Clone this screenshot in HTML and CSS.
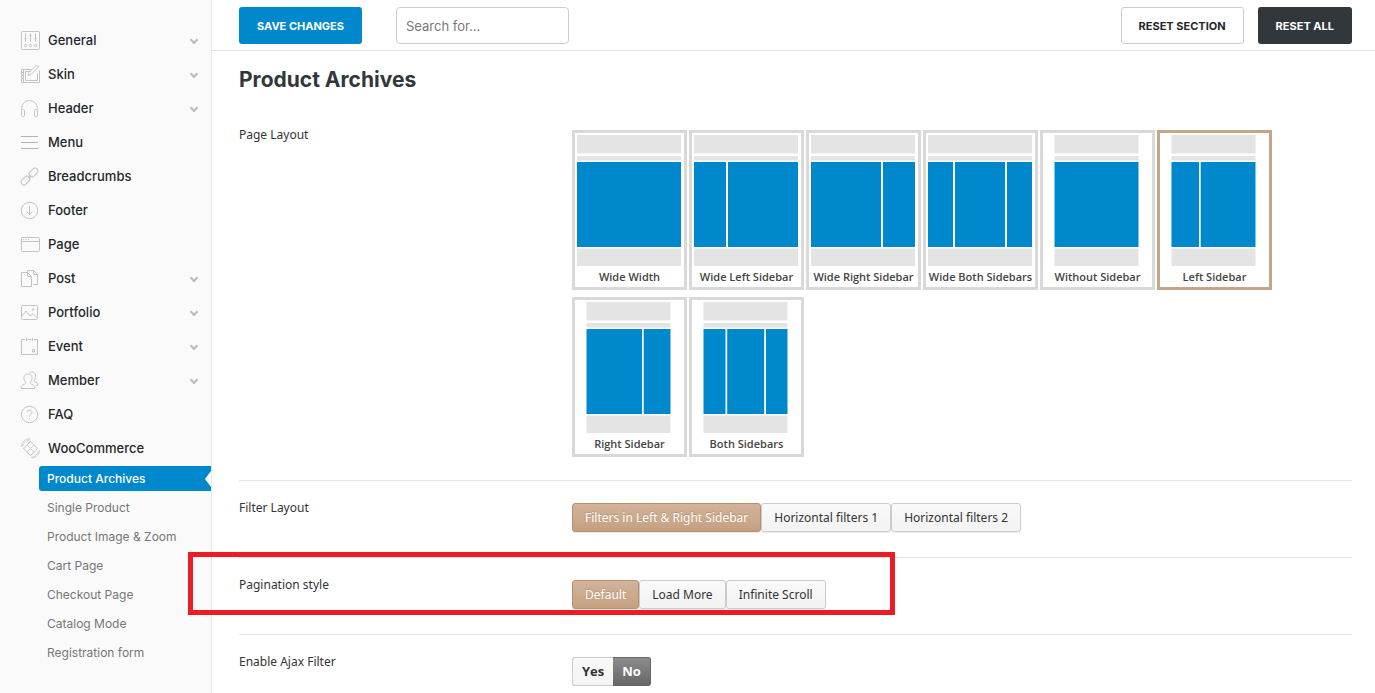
FILE: index.html
```html
<!DOCTYPE html>
<html lang="en">
<head>
  <meta charset="UTF-8">
  <meta name="viewport" content="width=device-width, initial-scale=1.0">
  <title>Theme Options - Product Archives</title>
  <link rel="stylesheet" href="styles.css">
</head>
<body>

  <!-- Sidebar -->
  <nav class="sidebar">
    <ul class="menu">
      <li><a href="#" class="has-sub">
        <svg class="icon" viewBox="0 0 20 20"><rect x="1.500" y="1.500" width="18" height="18" rx="1"/><path d="M5.500 3.500v8M10.500 3.500v8M15.500 3.500v8M4.500 8.500h2M9.500 5.500h2M14.500 8.500h2"/><circle cx="5.500" cy="15.500" r="1.200"/><circle cx="10.500" cy="15.500" r="1.200"/><circle cx="15.500" cy="15.500" r="1.200"/></svg>
        General</a></li>
      <li><a href="#" class="has-sub">
        <svg class="icon" viewBox="0 0 20 20"><path d="M11.500 5.500h-10v13h18V6.500M3.500 5.500v13M1.500 8.500h2M1.500 11.500h2M1.500 14.500h2M11 7.500H5.500v9h12V9.500M8 11.500l1-3L16.500 1l2 2L11 10.500z"/></svg>
        Skin</a></li>
      <li><a href="#" class="has-sub">
        <svg class="icon" viewBox="0 0 20 20"><path d="M1.500 11.500V10.500a8 8 0 0 1 16 0v1"/><rect x="1.500" y="11.500" width="3" height="7" rx="1"/><rect x="14.500" y="11.500" width="3" height="7" rx="1"/></svg>
        Header</a></li>
      <li><a href="#">
        <svg class="icon bars" viewBox="0 0 20 20"><path d="M1 4.500h17M1 10.500h17M1 16.500h17"/></svg>
        Menu</a></li>
      <li><a href="#">
        <svg class="icon" viewBox="0 0 20 20"><rect x="-5" y="-2.800" width="10" height="5.600" rx="2.800" transform="translate(13.500 6.500) rotate(-45)"/><rect x="-5" y="-2.800" width="10" height="5.600" rx="2.800" transform="translate(5.500 14.500) rotate(-45)"/><path d="M7.500 12.500l4-4"/></svg>
        Breadcrumbs</a></li>
      <li><a href="#">
        <svg class="icon" viewBox="0 0 20 20"><circle cx="9.500" cy="10.500" r="8.200"/><path d="M9.500 6v8.500M6.500 11.500l3 3 3-3"/></svg>
        Footer</a></li>
      <li><a href="#">
        <svg class="icon" viewBox="0 0 20 20"><rect x="1.500" y="3.500" width="18" height="14" rx="1"/><path d="M1.500 7.500h18M3 5.500h1M5.500 5.500h1M8 5.500h1"/></svg>
        Page</a></li>
      <li><a href="#" class="has-sub">
        <svg class="icon" viewBox="0 0 20 20"><path d="M1.500 4.500h6l4 4v10h-10zM7.500 4.500v4h4M7.500 4V2.500h6l4 4v10h-4.500M13.500 2.500v4h4"/></svg>
        Post</a></li>
      <li><a href="#" class="has-sub">
        <svg class="icon" viewBox="0 0 20 20"><rect x="1.500" y="3.500" width="16" height="14" rx="1"/><path d="M1.500 14.500L6 9l4 5 3-2.500 4.500 4.500"/><circle cx="13" cy="7.500" r=".8"/></svg>
        Portfolio</a></li>
      <li><a href="#" class="has-sub">
        <svg class="icon" viewBox="0 0 20 20"><path d="M5 3.500H1.500v15h16v-15H14M7.500 3.500h4M6.500 2v3M12.500 2v3M12.500 13.500h2V16h-2z"/></svg>
        Event</a></li>
      <li><a href="#" class="has-sub">
        <svg class="icon" viewBox="0 0 20 20"><path d="M1 18.500c0-3 1.500-3.500 3.500-4.200 1.500-.5 1.500-1.300.8-2.300C2.500 8 4 4 8 4s5.500 4 2.700 8c-.7 1-.7 1.800.8 2.300 2 .7 3.500 1.200 3.500 4.200zM9.500 3c1-1 2-1.200 3-1 3.500.7 4 4.500 2 7.800-.6 1-.5 1.700.8 2.200 1.500.6 2.500 1 2.500 3.500h-2"/></svg>
        Member</a></li>
      <li><a href="#">
        <svg class="icon" viewBox="0 0 20 20"><circle cx="9.500" cy="10.500" r="8.200"/><path d="M7 8.500a2.500 2.500 0 1 1 3.500 2.300c-.8.4-1 .8-1 1.700M9.500 14.200v1"/></svg>
        FAQ</a></li>
      <li>
        <a href="#">
          <svg class="icon woo" viewBox="0 0 20 20"><rect x="5.500" y="5.500" width="10" height="10" transform="rotate(45 10.500 10.500)"/><path d="M7 7l7 7M14 7l-7 7M2.500 8C3.500 4.500 6.500 2 10 1.500M1.500 9C1.500 4 5.500.5 10 .5M11 19.500c4-.5 6.500-3 7.500-6.500M12 20c5-.5 7.500-4 7.500-8"/></svg>
          WooCommerce</a>
        <ul class="submenu">
          <li><a href="#" class="active">Product Archives</a></li>
          <li><a href="#">Single Product</a></li>
          <li><a href="#">Product Image &amp; Zoom</a></li>
          <li><a href="#">Cart Page</a></li>
          <li><a href="#">Checkout Page</a></li>
          <li><a href="#">Catalog Mode</a></li>
          <li><a href="#">Registration form</a></li>
        </ul>
      </li>
      <li><a href="#" aria-label="More options">
        <svg class="icon" viewBox="0 0 20 20"><path d="M6 3.500h15v14H6z"/></svg>
      </a></li>
    </ul>
  </nav>

  <!-- Options panel -->
  <main class="panel">
    <header class="topbar">
      <button type="button" class="btn btn-primary">Save Changes</button>
      <input type="text" class="search" placeholder="Search for..." aria-label="Search for">
      <button type="button" class="btn btn-light">Reset Section</button>
      <button type="button" class="btn btn-dark">Reset All</button>
    </header>

    <form class="options">
      <h2>Product Archives</h2>

      <div class="field" role="radiogroup" aria-labelledby="layoutTitle">
        <div class="field-title" id="layoutTitle">Page Layout</div>
        <div class="layouts">
          <label class="layout">
            <input type="radio" name="layout">
            <svg viewBox="0 0 109 134"><path class="block" d="M2 2h104v18.500H2zM2 23h104v4.500H2zM2 115.500h104V133H2z"/><path class="area" d="M2 29h104v85H2z"/></svg>
            <span>Wide Width</span>
          </label>
          <label class="layout">
            <input type="radio" name="layout">
            <svg viewBox="0 0 109 134"><path class="block" d="M2 2h104v18.500H2zM2 23h104v4.500H2zM2 115.500h104V133H2z"/><path class="area" d="M2 29h32v85H2zM36 29h70v85H36z"/></svg>
            <span>Wide Left Sidebar</span>
          </label>
          <label class="layout">
            <input type="radio" name="layout">
            <svg viewBox="0 0 109 134"><path class="block" d="M2 2h104v18.500H2zM2 23h104v4.500H2zM2 115.500h104V133H2z"/><path class="area" d="M2 29h70v85H2zM74 29h32v85H74z"/></svg>
            <span>Wide Right Sidebar</span>
          </label>
          <label class="layout">
            <input type="radio" name="layout">
            <svg viewBox="0 0 109 134"><path class="block" d="M2 2h104v18.500H2zM2 23h104v4.500H2zM2 115.500h104V133H2z"/><path class="area" d="M2 29h25v85H2zM29 29h50v85H29zM81 29h25v85H81z"/></svg>
            <span>Wide Both Sidebars</span>
          </label>
          <label class="layout">
            <input type="radio" name="layout">
            <svg viewBox="0 0 109 134"><path class="block" d="M11.500 2h84v18.500h-84zM11.500 23h84v4.500h-84zM11.500 115.500h84V133h-84z"/><path class="area" d="M11.500 29h84v85h-84z"/></svg>
            <span>Without Sidebar</span>
          </label>
          <label class="layout">
            <input type="radio" name="layout" checked>
            <svg viewBox="0 0 109 134"><path class="block" d="M11.500 2h84v18.500h-84zM11.500 23h84v4.500h-84zM11.500 115.500h84V133h-84z"/><path class="area" d="M11.500 29H39v85H11.500zM40.700 29h54.800v85H40.700z"/></svg>
            <span>Left Sidebar</span>
          </label>
          <label class="layout">
            <input type="radio" name="layout">
            <svg viewBox="0 0 109 134"><path class="block" d="M11.500 2h84v18.500h-84zM11.500 23h84v4.500h-84zM11.500 115.500h84V133h-84z"/><path class="area" d="M11.500 29H67v85H11.500zM68.700 29h26.800v85H68.700z"/></svg>
            <span>Right Sidebar</span>
          </label>
          <label class="layout">
            <input type="radio" name="layout">
            <svg viewBox="0 0 109 134"><path class="block" d="M11.500 2h84v18.500h-84zM11.500 23h84v4.500h-84zM11.500 115.500h84V133h-84z"/><path class="area" d="M11.500 29h22v85h-22zM35.200 29h37v85h-37zM74 29h21.500v85H74z"/></svg>
            <span>Both Sidebars</span>
          </label>
        </div>
      </div>

      <div class="field" role="radiogroup" aria-labelledby="filterTitle">
        <div class="field-title" id="filterTitle">Filter Layout</div>
        <div class="buttonset">
          <label><input type="radio" name="filter" checked><span>Filters in Left &amp; Right Sidebar</span></label>
          <label><input type="radio" name="filter"><span>Horizontal filters 1</span></label>
          <label><input type="radio" name="filter"><span>Horizontal filters 2</span></label>
        </div>
      </div>

      <div class="field marked" role="radiogroup" aria-labelledby="pagingTitle">
        <div class="field-title" id="pagingTitle">Pagination style</div>
        <div class="buttonset">
          <label><input type="radio" name="paging" checked><span>Default</span></label>
          <label><input type="radio" name="paging"><span>Load More</span></label>
          <label><input type="radio" name="paging"><span>Infinite Scroll</span></label>
        </div>
      </div>

      <div class="field" role="radiogroup" aria-labelledby="ajaxTitle">
        <div class="field-title" id="ajaxTitle">Enable Ajax Filter</div>
        <div class="switch">
          <label><input type="radio" name="ajax"><span>Yes</span></label>
          <label><input type="radio" name="ajax" checked><span>No</span></label>
        </div>
      </div>
    </form>
  </main>

</body>
</html>
```

FILE: styles.css
```css
*,
*::before,
*::after {
  margin: 0;
  padding: 0;
  box-sizing: border-box;
}

body {
  display: flex;
  height: 100vh;
  overflow: hidden;
  background-color: #fff;
  color: #333;
  font-family: "Noto Sans", "Open Sans", sans-serif;
  font-size: 12px;
}

ul {
  list-style: none;
}

a {
  text-decoration: none;
}

/* Sidebar */
.sidebar {
  flex: 0 0 212px;
  padding-top: 23px;
  background-color: #fafafa;
  border-right: 1px solid #e5e5e5;
  font-family: Inter, sans-serif;
}

.menu > li > a {
  display: flex;
  align-items: center;
  gap: 8px;
  height: 34px;
  padding-left: 20px;
  color: #23282d;
  font-size: 13px;
  font-weight: 500;
}

.icon {
  width: 20px;
  height: 20px;
  overflow: visible;
  fill: none;
  stroke: #c4c4c4;
  stroke-width: 1;
}

.bars {
  stroke: #b4b4b4;
}

.woo {
  stroke: #d0d0d0;
}

.has-sub::after {
  content: "";
  width: 6px;
  height: 6px;
  margin: 0 14px 0 auto;
  border: solid #bbb;
  border-width: 0 2px 2px 0;
  transform: rotate(45deg);
}

.submenu {
  display: flex;
  flex-direction: column;
  gap: 4px;
  margin: 1px 0 24px 39px;
}

.submenu a {
  display: block;
  padding-left: 8px;
  color: #777;
  font-size: 12px;
  line-height: 25px;
}

.submenu .active {
  position: relative;
  background-color: #0088cc;
  border-radius: 3px 0 0 3px;
  color: #fff;
  font-weight: 500;
}

.submenu .active::after {
  content: "";
  position: absolute;
  top: 5px;
  right: 0;
  border: solid transparent;
  border-width: 8px 6px 8px 0;
  border-right-color: #fff;
}

/* Top bar */
.panel {
  flex: 1;
  min-width: 0;
}

.topbar {
  display: flex;
  gap: 14px;
  padding: 7px 23px 6px 27px;
  border-bottom: 1px solid #e5e5e5;
}

.btn {
  height: 37px;
  padding: 0 17px;
  border: 1px solid transparent;
  border-radius: 3px;
  font-family: Inter, sans-serif;
  font-size: 11px;
  font-weight: 700;
  text-transform: uppercase;
  cursor: pointer;
}

.btn-primary {
  background-color: #0088cc;
  color: #fff;
}

.btn-light {
  background-color: #fff;
  border-color: #ccc;
  color: #23282d;
}

.btn-dark {
  background-color: #32373c;
  color: #fff;
}

.search {
  width: 173px;
  height: 37px;
  margin: 0 auto 0 20px;
  padding: 0 9px;
  border: 1px solid #ccc;
  border-radius: 4px;
  font-family: Inter, sans-serif;
  font-size: 13px;
}

.search::placeholder {
  color: #777;
}

/* Fields */
.options {
  padding: 14px 23px 0 27px;
}

h2 {
  color: #32373c;
  font-family: Inter, sans-serif;
  font-size: 21px;
  font-weight: 700;
  line-height: 30px;
}

.field {
  display: grid;
  grid-template-columns: 333px 1fr;
  padding: 22px 0 23px;
  border-top: 1px solid #e5e5e5;
}

h2 + .field {
  margin-top: 12px;
  border-top-color: transparent;
}

.field-title {
  margin-top: -5px;
  line-height: 20px;
}

input[type="radio"] {
  position: absolute;
  opacity: 0;
}

/* Layout pictures */
.layouts {
  display: flex;
  flex-wrap: wrap;
  gap: 7px 2px;
}

.layout {
  display: flex;
  flex-direction: column;
  width: 115px;
  height: 160px;
  border: 3px solid #d9d9d9;
  cursor: pointer;
}

.layout:has(:checked) {
  border-color: #c7a589;
}

.layout span {
  color: #444;
  font-family: "Open Sans", sans-serif;
  font-size: 11px;
  font-weight: 600;
  line-height: 20px;
  text-align: center;
  white-space: nowrap;
}

.block {
  fill: #e4e4e4;
}

.area {
  fill: #0088cc;
}

/* Button sets */
.buttonset,
.switch {
  display: flex;
  padding-bottom: 2px;
}

.buttonset span {
  display: block;
  padding: 0 12px;
  background: linear-gradient(#f9f9f9, #f3f3f3);
  border: 1px solid #ccc;
  border-radius: 3px;
  box-shadow: 0 1px 1px rgba(0, 0, 0, 0.08);
  line-height: 27px;
  white-space: nowrap;
  cursor: pointer;
}

.buttonset :checked + span {
  background: linear-gradient(#d2b49c, #c4a080);
  border-color: #b98f6b;
  color: #fff;
  text-shadow: 0 -1px 1px #b98f6b;
}

/* Red frame around the pagination field */
.marked {
  position: relative;
}

.marked::after {
  content: "";
  position: absolute;
  top: -6px;
  left: -51px;
  width: 707px;
  height: 63px;
  border: 5px solid #ed1c24;
  pointer-events: none;
}

/* Yes / No switch */
.switch span {
  display: block;
  padding: 0 9px;
  background: linear-gradient(#f9f9f9, #f3f3f3);
  border: 1px solid #ccc;
  border-right: 0;
  border-radius: 3px 0 0 3px;
  font-size: 13px;
  font-family: "Open Sans", sans-serif;
  font-weight: 700;
  line-height: 27px;
  cursor: pointer;
}

.switch label + label span {
  border-right: 1px solid #ccc;
  border-left: 0;
  border-radius: 0 3px 3px 0;
}

.switch :checked + span {
  background: linear-gradient(#8c8c8c, #666);
  border-color: #666 !important;
  color: #fff;
}
```
